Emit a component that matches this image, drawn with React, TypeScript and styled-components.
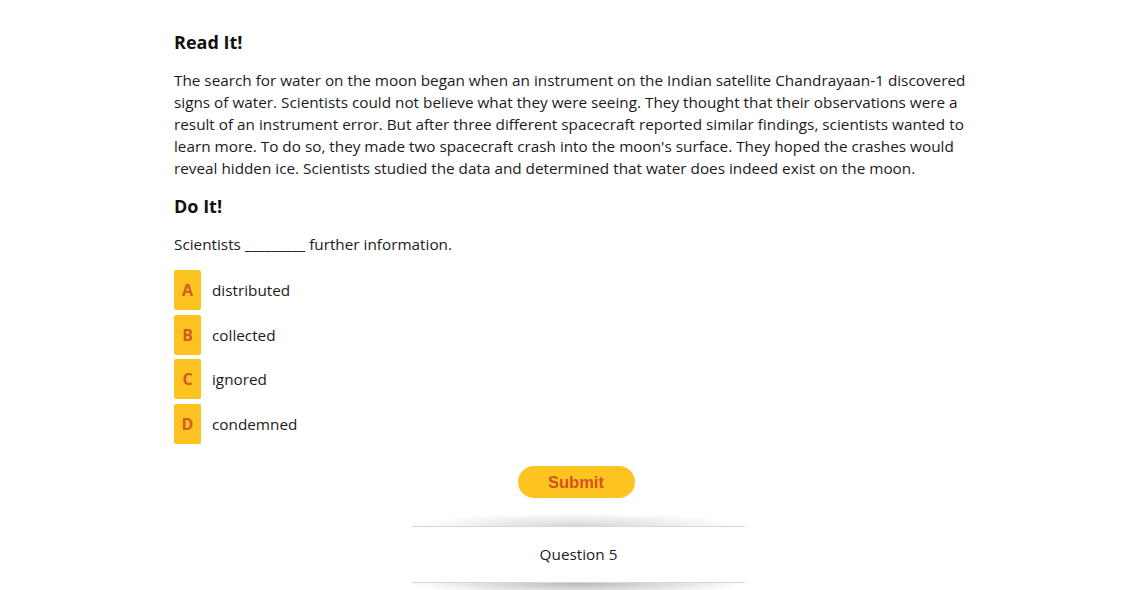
import React from "react";
import styled, { createGlobalStyle } from "styled-components";

const Global = createGlobalStyle`
  html, body { margin: 0; padding: 0; background: #fff; }
  body { font-family: "Open Sans", sans-serif; color: #1b1b1b; }
`;

const Page = styled.div`
  width: 804px;
  margin: 0 0 0 174px;
  padding-top: 29px;
`;

const Heading = styled.h2`
  margin: 0;
  font-size: 18px;
  line-height: 26px;
  font-weight: 700;
  color: #111;
`;

const Para = styled.p<{ $mt: number }>`
  margin: ${(p) => p.$mt}px 0 0;
  font-size: 15.3px;
  line-height: 22px;
  width: 800px;
`;

const Section = styled.section<{ $mt: number }>`
  margin-top: ${(p) => p.$mt}px;
`;

const Options = styled.div`
  display: flex;
  flex-direction: column;
  gap: 4.6px;
  margin-top: 15px;
`;

const Option = styled.div`
  display: flex;
  align-items: center;
  gap: 11px;
  height: 40px;
  cursor: pointer;
`;

const Letter = styled.span`
  width: 27px;
  height: 40px;
  border-radius: 2px;
  background: #fdc421;
  color: #d35b1d;
  font-weight: 700;
  font-size: 16px;
  display: flex;
  align-items: center;
  justify-content: center;
`;

const Label = styled.span`
  font-size: 15.3px;
`;

const ButtonRow = styled.div`
  display: flex;
  justify-content: center;
  margin-top: 22px;
`;

const Submit = styled.button`
  width: 117px;
  height: 32px;
  border: none;
  border-radius: 16px;
  background: #fdc421;
  color: #d5521f;
  font-family: "Liberation Sans", Arial, sans-serif;
  font-weight: 700;
  font-size: 16.5px;
  padding-top: 2px;
  cursor: pointer;
`;

const Footer = styled.div`
  width: 333px;
  margin: 15px 0 0 238px;
`;

const Shade = styled.div<{ $down?: boolean }>`
  height: 13px;
  background: ${(p) =>
    p.$down
      ? "radial-gradient(ellipse 50% 100% at 50% 0%, rgba(0,0,0,0.28), rgba(0,0,0,0) 100%)"
      : "radial-gradient(ellipse 50% 100% at 50% 100%, rgba(0,0,0,0.16), rgba(0,0,0,0) 100%)"};
`;

const FooterBar = styled.div`
  height: 55px;
  border-top: 1px solid #d6d6d6;
  border-bottom: 1px solid #d6d6d6;
  display: flex;
  align-items: center;
  justify-content: center;
  font-size: 15.3px;
`;

const options = [
  ["A", "distributed"],
  ["B", "collected"],
  ["C", "ignored"],
  ["D", "condemned"],
];

export default function App() {
  return (
    <>
      <Global />
      <Page>
        <Heading>Read It!</Heading>
        <Para $mt={14}>
          The search for water on the moon began when an instrument on the Indian satellite Chandrayaan-1 discovered
          signs of water. Scientists could not believe what they were seeing. They thought that their observations were a
          result of an instrument error. But after three different spacecraft reported similar findings, scientists wanted to
          learn more. To do so, they made two spacecraft crash into the moon's surface. They hoped the crashes would
          reveal hidden ice. Scientists studied the data and determined that water does indeed exist on the moon.
        </Para>
        <Section $mt={14}>
          <Heading>Do It!</Heading>
          <Para $mt={14}>Scientists _________ further information.</Para>
          <Options>
            {options.map(([l, t]) => (
              <Option key={l}>
                <Letter>{l}</Letter>
                <Label>{t}</Label>
              </Option>
            ))}
          </Options>
        </Section>
        <ButtonRow>
          <Submit>Submit</Submit>
        </ButtonRow>
        <Footer>
          <Shade />
          <FooterBar>Question 5</FooterBar>
          <Shade $down />
        </Footer>
      </Page>
    </>
  );
}
